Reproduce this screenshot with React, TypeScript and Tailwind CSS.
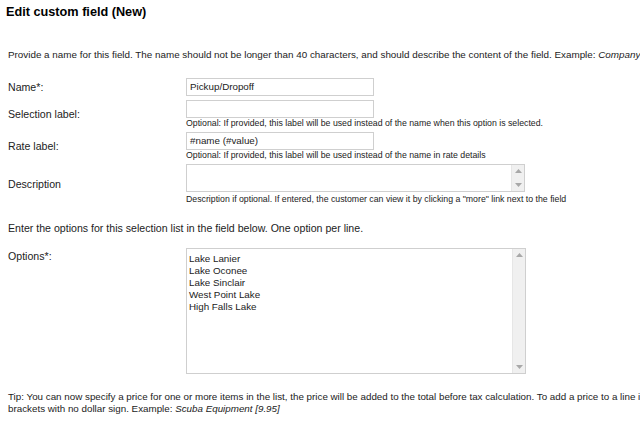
import React from "react";

function Scrollbar() {
  return (
    <div className="flex h-full w-[13px] shrink-0 flex-col items-center justify-between border-l border-[#e6e6e6] bg-[#f0f0f0] py-[4px]">
      <svg width="7" height="4" viewBox="0 0 7 4"><path d="M3.5 0L7 4H0z" fill="#a8a8a8" /></svg>
      <svg width="7" height="4" viewBox="0 0 7 4"><path d="M0 0H7L3.5 4z" fill="#a8a8a8" /></svg>
    </div>
  );
}

export default function App() {
  return (
    <div className="relative h-[427px] w-[640px] overflow-hidden bg-white font-['Liberation_Sans',Arial,sans-serif] text-[#222]">
      <div className="w-[760px]">
        <h1 className="pl-[6px] pt-[3px] text-[12.7px] font-bold leading-[18px] text-black">Edit custom field (New)</h1>
        <p className="mt-[28px] whitespace-nowrap pl-[8px] text-[9.85px] leading-[12px]">
          Provide a name for this field. The name should not be longer than 40 characters, and should describe the content of the field. Example: <i>Company Name</i>
        </p>

        <div className="mt-[17px] flex flex-col gap-[4px] pl-[8px]">
          <div className="flex items-center">
            <div className="w-[178px] text-[10.6px] leading-[12px]">Name*:</div>
            <div className="flex h-[18px] w-[188px] items-center border border-[#cfcfcf] px-[3px] text-[9.8px]">Pickup/Dropoff</div>
          </div>
          <div className="flex items-center">
            <div className="w-[178px] text-[10.6px] leading-[12px]">Selection label:</div>
            <div>
              <div className="h-[18px] w-[188px] border border-[#cfcfcf]" />
              <div className="whitespace-nowrap text-[8.75px] leading-[10px]">Optional: If provided, this label will be used instead of the name when this option is selected.</div>
            </div>
          </div>
          <div className="flex items-center">
            <div className="w-[178px] text-[10.6px] leading-[12px]">Rate label:</div>
            <div>
              <div className="flex h-[18px] w-[188px] items-center border border-[#cfcfcf] px-[3px] text-[9.8px]">#name (#value)</div>
              <div className="whitespace-nowrap text-[8.75px] leading-[10px]">Optional: If provided, this label will be used instead of the name in rate details</div>
            </div>
          </div>
          <div className="flex items-center">
            <div className="w-[178px] text-[10.6px] leading-[12px]">Description</div>
            <div>
              <div className="flex h-[28px] w-[339px] border border-[#cfcfcf]">
                <div className="flex-1" />
                <Scrollbar />
              </div>
              <div className="whitespace-nowrap pt-[2px] text-[8.75px] leading-[10px]">Description if optional. If entered, the customer can view it by clicking a "more" link next to the field</div>
            </div>
          </div>
        </div>

        <p className="mt-[18px] pl-[8px] text-[10.6px] leading-[12px]">Enter the options for this selection list in the field below. One option per line.</p>

        <div className="mt-[14px] flex items-start pl-[8px]">
          <div className="w-[178px] pt-[2px] text-[10.6px] leading-[12px]">Options*:</div>
          <div className="flex h-[126px] w-[340px] border border-[#cfcfcf]">
            <div className="flex-1 px-[2px] pt-[4px] text-[9.8px] leading-[12px]">
              <div>Lake Lanier</div>
              <div>Lake Oconee</div>
              <div>Lake Sinclair</div>
              <div>West Point Lake</div>
              <div>High Falls Lake</div>
            </div>
            <Scrollbar />
          </div>
        </div>

        <div className="mt-[17px] pl-[8px] text-[9.8px] leading-[12px]">
          <div className="whitespace-nowrap">Tip: You can now specify a price for one or more items in the list, the price will be added to the total before tax calculation. To add a price to a line item, enclose the price in square</div>
          <div className="whitespace-nowrap">brackets with no dollar sign. Example: <i>Scuba Equipment [9.95]</i></div>
        </div>
      </div>
    </div>
  );
}
